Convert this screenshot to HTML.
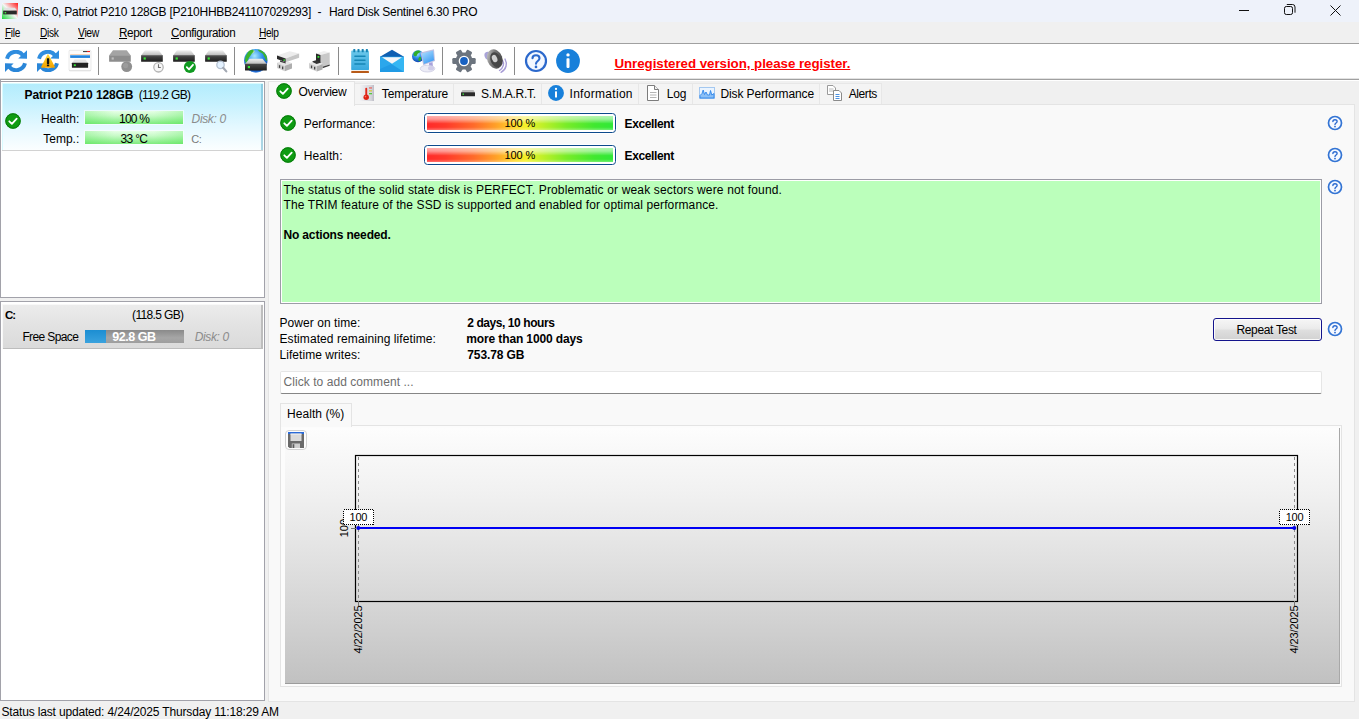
<!DOCTYPE html>
<html lang="en">
<head>
<meta charset="utf-8">
<title>Hard Disk Sentinel</title>
<style>
html,body{margin:0;padding:0}
body{width:1359px;height:719px;overflow:hidden;position:relative;background:#f0f0f0;font-family:"Liberation Sans",sans-serif;font-size:12px;color:#000}
.a{position:absolute}
.t{position:absolute;white-space:nowrap;line-height:14px;height:14px}
.b{font-weight:bold}
u{text-decoration-thickness:1px;text-underline-offset:1px}
#titlebar{left:0;top:0;width:1359px;height:23px;background:linear-gradient(#eef2fa 0,#eef2fa 22px,#eff1f5 22px)}
#menubar{left:0;top:22px;width:1359px;height:21px;background:#f0f0f0}
#toolbar{left:0;top:43px;width:1359px;height:38px;background:#fff;border-top:1px solid #a0a0a0;box-sizing:border-box;box-shadow:inset 0 -1px 0 #fff,inset 0 -2px 0 #a0a0a0,inset 0 -3px 0 #e2e2e2}
.sep{position:absolute;top:47px;width:1px;height:28px;background:#8a8a8a}
.ic{position:absolute;top:50px;width:22px;height:22px;overflow:visible}
.panel{position:absolute;background:#fff;border:1px solid #a2a2aa;box-sizing:border-box}
.tab{position:absolute;top:83px;height:21px;box-sizing:border-box;border:1px solid #e7e7e7;border-bottom:none;background:#f4f4f4}
.gbar{width:98px;height:13px;background:linear-gradient(90deg,rgba(110,232,110,.35),rgba(255,255,255,.12) 30%,rgba(255,255,255,.12) 70%,rgba(110,232,110,.35)),linear-gradient(#e2ffe2 0%,#c2fac2 35%,#8cf08c 75%,#6ce86c 100%);box-shadow:0 0 0 1px rgba(255,255,255,.55)}
.pbar{width:192px;height:20px;box-sizing:border-box;border:1px solid #0d4a8c;border-radius:3.500px;background:#fff;box-shadow:0 0 0 1px rgba(255,255,255,.9)}
.pbar i{position:absolute;left:2px;top:2px;right:2px;bottom:2px;background:linear-gradient(rgba(255,255,255,.62) 0%,rgba(255,255,255,.5) 22%,rgba(255,255,255,0) 55%,rgba(255,255,255,0) 80%,rgba(255,255,255,.3) 100%),linear-gradient(90deg,#ff2a2a 0%,#ff3a2a 10%,#ff6a2a 25%,#ffa028 37%,#ffd628 47%,#f4f028 53%,#c0f028 62%,#78ec28 75%,#40e830 90%,#30e838 100%)}
</style>
</head>
<body>
<svg width="0" height="0" style="position:absolute">
<defs>
<symbol id="ok" viewBox="0 0 16 16"><circle cx="8" cy="8" r="7.700" fill="#0e9c12"/><circle cx="8" cy="8" r="7.200" fill="none" stroke="#097a0c" stroke-width="1"/><path d="M4.300 8.300 L6.900 10.900 L11.700 5.600" fill="none" stroke="#fff" stroke-width="1.800" stroke-linecap="round" stroke-linejoin="round"/></symbol>
<symbol id="help" viewBox="0 0 16 16"><circle cx="8" cy="8" r="6.500" fill="#f6f9ff" stroke="#3374d4" stroke-width="1.700"/><path d="M5.900 6.500 C5.900 4.100 10.100 4.100 10.100 6.400 C10.100 8 8 7.900 8 9.600" fill="none" stroke="#2c6ad0" stroke-width="1.400" stroke-linecap="round"/><circle cx="8" cy="11.600" r="0.900" fill="#2c6ad0"/></symbol>
<linearGradient id="gtop" x1="0" y1="0" x2="0" y2="1"><stop offset="0" stop-color="#f2f2f2"/><stop offset="1" stop-color="#b9b9b9"/></linearGradient>
<linearGradient id="gfront" x1="0" y1="0" x2="0" y2="1"><stop offset="0" stop-color="#4a4a4a"/><stop offset="1" stop-color="#1e1e1e"/></linearGradient>
<linearGradient id="gwarn" x1="0" y1="0" x2="0" y2="1"><stop offset="0" stop-color="#ffd83a"/><stop offset="1" stop-color="#f4a300"/></linearGradient>
<linearGradient id="gmail" x1="0" y1="0" x2="1" y2="1"><stop offset="0" stop-color="#1a86d4"/><stop offset="1" stop-color="#3cbcf0"/></linearGradient>
<radialGradient id="gglobe" cx=".45" cy=".3" r=".75"><stop offset="0" stop-color="#a8e8ff"/><stop offset=".45" stop-color="#2f92ec"/><stop offset="1" stop-color="#0b3aa6"/></radialGradient>
<linearGradient id="gapp" x1="1" y1="0" x2="0" y2="1"><stop offset="0" stop-color="#ff1a1a"/><stop offset=".5" stop-color="#f6f6f6"/><stop offset="1" stop-color="#19d83a"/></linearGradient>
<symbol id="disk" viewBox="0 0 22 12"><polygon points="4,0.200 17.700,0.200 21.800,5.400 0.100,5.400" fill="url(#gtop)"/><rect x="0.100" y="5.200" width="21.700" height="6.500" rx=".5" fill="url(#gfront)"/><rect x="0.100" y="5.200" width="21.700" height="1" fill="#666" opacity=".6"/><rect x="2.600" y="7.400" width="2.200" height="2.200" fill="#35e535"/></symbol>
<symbol id="rf" viewBox="0 0 22 22"><g fill="#2f8ddf"><path d="M2 8.750 A9.200 9.200 0 0 1 18 5.200" stroke="#2f8ddf" stroke-width="4" fill="none"/><polygon points="22,0.200 22,8.800 13.200,8.500"/><path d="M20 13.300 A9.200 9.200 0 0 1 4 16.800" stroke="#2a86d8" stroke-width="4" fill="none"/><polygon points="0,22 0,13.300 8.600,13.500" fill="#2a86d8"/></g></symbol>
<symbol id="info" viewBox="0 0 24 24"><circle cx="12" cy="12" r="11.900" fill="#1880da"/><circle cx="12" cy="5.900" r="1.700" fill="#fff"/><rect x="10.500" y="9.200" width="3" height="9.700" rx=".8" fill="#fff"/></symbol>
</defs></svg>
<!-- title bar -->
<div class="a" id="titlebar"></div>
<div class="t" id="title" style="left:23.20px;top:5px;letter-spacing:-0.257px">Disk: 0, Patriot P210 128GB [P210HHBB241107029293]</div>
<div class="t" id="title2" style="left:317.60px;top:5px;letter-spacing:0.200px">-</div>
<div class="t" id="title3" style="left:328.90px;top:5px;letter-spacing:-0.262px">Hard Disk Sentinel 6.30 PRO</div>
<!-- menu bar -->
<div class="a" id="menubar"></div>
<div class="t" id="m1" style="left:4.83px;top:26px;letter-spacing:-0.4px;transform:scaleX(0.843);transform-origin:0 0"><u>F</u>ile</div>
<div class="t" id="m2" style="left:39.82px;top:26px;letter-spacing:-0.4px;transform:scaleX(0.849);transform-origin:0 0"><u>D</u>isk</div>
<div class="t" id="m3" style="left:77.81px;top:26px;letter-spacing:-0.4px;transform:scaleX(0.867);transform-origin:0 0"><u>V</u>iew</div>
<div class="t" id="m4" style="left:118.52px;top:26px;letter-spacing:-0.4px;transform:scaleX(0.976);transform-origin:0 0"><u>R</u>eport</div>
<div class="t" id="m5" style="left:170.62px;top:26px;letter-spacing:-0.4px;transform:scaleX(0.971);transform-origin:0 0"><u>C</u>onfiguration</div>
<div class="t" id="m6" style="left:258.62px;top:26px;letter-spacing:-0.4px;transform:scaleX(0.849);transform-origin:0 0"><u>H</u>elp</div>
<!-- toolbar -->
<div class="a" id="toolbar"></div>
<svg class="a" style="left:2px;top:3px" width="16" height="16" viewBox="0 0 16 16"><rect width="16" height="16" fill="url(#gapp)"/><polygon points="3,4.800 13,4.800 14.800,7.600 1.200,7.600" fill="#e2e2e2"/><rect x="1.200" y="7.600" width="13.600" height="3.800" fill="#2a2a2a"/><rect x="2.600" y="9" width="1.600" height="1.400" fill="#3fe53f"/></svg>
<!-- window controls -->
<svg class="a" style="left:1230px;top:0" width="129" height="22" viewBox="0 0 129 22" fill="none" stroke="#111" stroke-width="1"><line x1="9" y1="10.500" x2="19" y2="10.500"/><rect x="54.500" y="6.500" width="8" height="8" rx="1.800"/><path d="M56.800 4.500 H62.500 A2.500 2.500 0 0 1 65 7 V12.700"/><path d="M100.500 5.500 L110.500 15.500 M110.500 5.500 L100.500 15.500"/></svg>
<!-- toolbar icons -->
<svg class="ic" style="left:5px" viewBox="0 0 22 22"><use href="#rf"/></svg>
<svg class="ic" style="left:37px" viewBox="0 0 22 22"><use href="#rf"/><polygon points="11,5 4.900,17 17.200,17" fill="url(#gwarn)" stroke="url(#gwarn)" stroke-width="1.500" stroke-linejoin="round"/><rect x="9.900" y="8.300" width="2.300" height="5.600" rx=".4" fill="#111"/><rect x="9.900" y="14.500" width="2.300" height="1.700" rx=".3" fill="#111"/></svg>
<svg class="ic" style="left:68px;width:24px;height:23px" viewBox="0 0 24 23"><rect x="1" y=".8" width="22" height="20.500" rx="1" fill="#b8b8b8" opacity=".55"/><rect x="1" y=".300" width="22" height="20.200" rx="1" fill="#fcfcfc" stroke="#dedede" stroke-width=".6"/><rect x="2.200" y="4" width="19.800" height=".8" fill="#f6c8a8"/><rect x="2.200" y="5.300" width="19.800" height="2.600" fill="#1c7fdc"/><rect x="2.200" y="5.300" width="19.800" height=".8" fill="#5aa8ee"/><rect x="15" y="1" width="4" height="1.100" fill="#444"/><rect x="19" y="1" width="3" height="1.100" fill="#f02020"/><polygon points="6.500,9.600 17.500,9.600 20,13 4,13" fill="#e4e4e4"/><rect x="3.900" y="12.700" width="16.200" height="5" rx=".5" fill="#232323"/><rect x="5.800" y="14.300" width="2" height="1.800" fill="#35e535"/></svg>
<div class="sep" style="left:98px"></div>
<svg class="ic" style="left:109px" viewBox="0 0 22 22"><polygon points="4,0.200 17.700,0.200 21.800,5.400 0.100,5.400" fill="#a4a4a4"/><rect x="0.100" y="5.200" width="21.700" height="6.600" rx=".5" fill="#8d8d8d"/><rect x="2.600" y="7.400" width="2.200" height="2.200" fill="#bdbdbd"/><circle cx="17.700" cy="16.600" r="5.400" fill="#8f8f8f"/><circle cx="16.600" cy="15.600" r="2.600" fill="#9c9c9c"/></svg>
<svg class="ic" style="left:141px" viewBox="0 0 22 22"><use href="#disk" width="22" height="12"/><circle cx="17.500" cy="17.300" r="4.700" fill="#f6f6f6" stroke="#b4b4b4" stroke-width="1.300"/><path d="M17.500 14.200 V17.500 H19.800" fill="none" stroke="#6e6e6e" stroke-width="1.100"/></svg>
<svg class="ic" style="left:173px" viewBox="0 0 22 22"><use href="#disk" width="22" height="12"/><circle cx="16.900" cy="17" r="6" fill="#0f9a20"/><path d="M13.800 17.200 L16 19.300 L20 14.800" fill="none" stroke="#fff" stroke-width="1.800" stroke-linecap="round" stroke-linejoin="round"/></svg>
<svg class="ic" style="left:205px" viewBox="0 0 22 22"><use href="#disk" width="22" height="12"/><circle cx="15.500" cy="14.900" r="3.700" fill="#e4f2ff" stroke="#b4c0d0" stroke-width="1.300"/><path d="M18.200 17.800 L21.300 21.400" stroke="#a2a8b2" stroke-width="2.200" stroke-linecap="round"/></svg>
<div class="sep" style="left:234px"></div>
<svg class="ic" style="left:244px;top:48px;width:24px;height:25px" viewBox="0 0 24 25"><circle cx="11.800" cy="12.600" r="11.700" fill="url(#gglobe)"/><path d="M3.500 5 C5 2.500 8 1.200 9.500 2.200 C10.500 3.500 8.500 4.500 7.500 6 C6.500 8 5.500 8.500 4.500 10.500 C3.500 12.500 3.800 14.500 2.500 15.500 C0.800 14.500 0 10 3.500 5 Z M13.500 1.500 C17 1.800 20.500 4 22.300 7.500 C23.300 10 23.300 12.500 22.500 13 C21.500 12.500 21.800 10.500 20.500 9 C19.500 8 19.800 6.500 18.500 5.500 C17 4.500 14.500 3.500 13.500 1.500 Z" fill="#3cb52e"/><path d="M9.500 2.200 C10.500 3.500 8.500 4.500 7.500 6 L9 5 C10.500 4 11.500 3 9.500 2.200 Z" fill="#d8f08a"/><path d="M3 20.500 Q12 26.500 21 20.500 Q17 24.400 12 24.400 Q7 24.400 3 20.500 Z" fill="#2d7ce0"/><polygon points="5.500,10.700 18.500,10.700 22.800,16 1,16" fill="url(#gtop)"/><rect x="1" y="15.800" width="21.800" height="6.600" rx=".5" fill="url(#gfront)"/><rect x="3.800" y="18" width="2.200" height="2.200" fill="#35e535"/></svg>
<svg class="ic" style="left:277px" viewBox="0 0 22 22"><polygon points="0,5.500 12.600,1.300 22.100,3.600 8.700,8.500" fill="#ececec"/><polygon points="8.700,8.500 22.100,3.600 22.100,7.800 8.700,12.300" fill="#c6c6c6"/><polygon points="0,5.500 8.700,8.500 8.700,12.300 0,9" fill="#2a2a2a"/><rect x="6.400" y="9.400" width="1.600" height="1.400" fill="#35e535"/><polygon points="0,12.700 3,11.800 3,10.300 8.700,12.400 11,11.600 15,13.300 7.800,15.800" fill="#e4e4e4"/><polygon points="3,10.200 8.700,12.300 8.700,13.600 3,11.700" fill="#3c3c3c"/><polygon points="0,12.700 7.800,15.800 7.800,21.300 0,18" fill="#d0d0d0"/><polygon points="7.800,15.800 15,13.300 15,18.600 7.800,21.300" fill="#aeaeae"/><rect x="1.900" y="15.200" width="1.300" height="2.700" fill="#444"/><rect x="5" y="16.500" width="1.300" height="2.700" fill="#444"/></svg>
<svg class="ic" style="left:309px" viewBox="0 0 22 22"><polygon points="7,3.500 15,1 20.700,2.500 11.500,5" fill="#efefef"/><polygon points="11.500,5 20.700,2.500 20.700,14.500 11.500,17.500" fill="#c8c8c8"/><polygon points="13.500,16.800 20.700,14.500 20.700,15.800 13.500,18.200" fill="#3a3a3a"/><polygon points="7,3.500 11.500,5 11.500,13 7,11.500" fill="#2a2a2a"/><rect x="8.500" y="6" width="1.800" height="1.800" fill="#35e535"/><polygon points="3.500,11.300 7,10.300 11.500,12 11.500,13.800 7.500,15 3.500,13" fill="#333"/><polygon points="0,13 3.500,12 7.600,14 11.500,12.800 13.500,13.600 13.500,14.200 7.800,16.200" fill="#e4e4e4"/><polygon points="0,13 7.800,16.200 7.800,21.600 0,18.300" fill="#d0d0d0"/><polygon points="7.800,16.200 13.500,14.200 13.500,19.500 7.800,21.600" fill="#aeaeae"/><rect x="1.900" y="15.500" width="1.300" height="2.700" fill="#444"/><rect x="5" y="16.800" width="1.300" height="2.700" fill="#444"/></svg>
<div class="sep" style="left:338px"></div>
<svg class="ic" style="left:351px;top:49px;width:18px;height:24px" viewBox="0 0 18 24"><defs><linearGradient id="gnote" x1="0" y1="0" x2="0" y2="1"><stop offset="0" stop-color="#6cc8ea"/><stop offset="1" stop-color="#36a8de"/></linearGradient></defs><rect x="0.200" y="1.500" width="17.800" height="19.700" rx="1" fill="url(#gnote)"/><rect x="0.200" y="21" width="17.800" height="1.100" fill="#f4f0ea"/><rect x="0.200" y="22" width="17.800" height="1.900" rx=".4" fill="#b85a18"/><g fill="#1784b4"><rect x="2.300" y="0" width="2" height="3.200" rx=".5"/><rect x="6.500" y="0" width="2" height="3.200" rx=".5"/><rect x="10.700" y="0" width="2" height="3.200" rx=".5"/><rect x="14.900" y="0" width="2" height="3.200" rx=".5"/></g><g fill="#1687b6"><rect x="3.200" y="6.500" width="11.500" height="1.500" rx=".7"/><rect x="3.200" y="10.400" width="11.500" height="1.500" rx=".7"/><rect x="3.200" y="14.300" width="11.500" height="1.500" rx=".7"/></g></svg>
<svg class="ic" style="left:380px;top:49px;width:24px;height:23px" viewBox="0 0 24 23"><polygon points="0,7.700 12,0.700 24,7.700 24,9 0,9" fill="#0f5fb2"/><rect x="0" y="7.700" width="24" height="15.200" fill="#35b6f3"/><polygon points="0,7.700 24,22.900 0,22.900" fill="#219be5"/><polygon points="0,7.700 12,14.750 0,20" fill="#2ba7ec"/><polygon points="2,8.250 22,8.250 12,14.750" fill="#f6f6f8"/></svg>
<svg class="ic" style="left:411px;top:49px;width:25px;height:24px" viewBox="0 0 25 24"><defs><linearGradient id="gscr" x1="0" y1="0" x2=".6" y2="1"><stop offset="0" stop-color="#b4e2ff"/><stop offset="1" stop-color="#3f9ef4"/></linearGradient></defs><circle cx="7" cy="7.250" r="6" fill="url(#gglobe)"/><path d="M4 2.500 C6 1 9 1.200 9.500 2.500 C9 4 6.500 4 6 6 C5.500 8 3.500 7.500 2.500 6 C2.500 4.500 3 3.500 4 2.500 Z M8.500 8 C9.500 7.500 10.500 8.500 10 10.500 C9.500 12 8 12.500 7.500 11.500 C7.200 10 7.500 8.700 8.500 8 Z" fill="#2fae28"/><polygon points="9.500,3.500 23,0.250 24,12 12.250,16.250" fill="#c0c0e2"/><polygon points="10.700,4.400 22.200,1.600 23,11.300 12.900,14.900" fill="url(#gscr)"/><polygon points="18,14.200 21.500,13 22,18 18,18.500" fill="#a8a2dc"/><ellipse cx="16.500" cy="19.600" rx="7.300" ry="3.400" fill="#ececf6" stroke="#c6c6de" stroke-width=".7"/><ellipse cx="20" cy="19.300" rx="3" ry="2.200" fill="#cfcce8"/></svg>
<div class="sep" style="left:442px"></div>
<svg class="ic" style="left:452px;top:49px;width:24px;height:24px" viewBox="-12 -12 24 24"><defs><linearGradient id="ggear" x1="0" y1="0" x2="0" y2="1"><stop offset="0" stop-color="#8a929c"/><stop offset="1" stop-color="#5a626c"/></linearGradient></defs><g fill="#6c747e" transform="rotate(30)"><circle r="8.600"/><g id="teeth"><rect x="-3" y="-11.700" width="6" height="5" rx="1.200"/><rect x="-3" y="6.700" width="6" height="5" rx="1.200"/></g><use href="#teeth" transform="rotate(60)"/><use href="#teeth" transform="rotate(120)"/></g><circle r="5.300" fill="#fff"/><circle r="3.900" fill="#1761c2"/></svg>
<svg class="ic" style="left:484px;top:49px;width:24px;height:24px" viewBox="0 0 24 24"><defs><linearGradient id="gspk" x1="0" y1="0" x2="1" y2="1"><stop offset="0" stop-color="#e0e0e0"/><stop offset=".4" stop-color="#7a7a7a"/><stop offset="1" stop-color="#303030"/></linearGradient></defs><path d="M18.500 11.500 C20.500 14.500 19.500 19 15.500 21.500 M21 10 C23.500 14.500 22.500 20.500 17 23.300" fill="none" stroke="#a79cd6" stroke-width="1.400" stroke-linecap="round"/><ellipse cx="3.800" cy="6.800" rx="3.200" ry="4" transform="rotate(-20 3.800 6.800)" fill="#a9a4d8"/><ellipse cx="10.800" cy="10" rx="7.600" ry="10" transform="rotate(-22 10.800 10)" fill="url(#gspk)"/><ellipse cx="11.800" cy="10.700" rx="5.200" ry="7.800" transform="rotate(-22 11.800 10.700)" fill="#474747"/><ellipse cx="10.600" cy="9.600" rx="2.600" ry="3.800" transform="rotate(-22 10.600 9.600)" fill="#cfcfcf"/></svg>
<div class="sep" style="left:514px"></div>
<svg class="ic" style="left:524px;top:49px;width:24px;height:24px" viewBox="0 0 24 24"><circle cx="12" cy="12" r="10" fill="#f4f8ff" stroke="#2b68cc" stroke-width="2.200"/><path d="M8.500 9.300 C8.500 5.300 15.500 5.300 15.500 9.300 C15.500 12 12 12 12 14.800" fill="none" stroke="#2b68cc" stroke-width="2.100" stroke-linecap="round"/><circle cx="12" cy="17.900" r="1.350" fill="#2b68cc"/></svg>
<svg class="ic" style="left:556px;top:49px;width:24px;height:24px" viewBox="0 0 24 24"><use href="#info"/></svg>

<div class="t b" id="unreg" style="left:614.40px;top:56px;letter-spacing:-0.049px;font-size:13.33px;line-height:16px;height:16px;text-decoration:underline;color:#ff0000">Unregistered version, please register.</div>
<!-- left panels -->
<div class="a" style="left:0;top:79px;width:1px;height:3px;background:#a2a2aa"></div>
<div class="panel" style="left:0;top:81px;width:265px;height:217px"></div>
<div class="panel" style="left:0;top:301px;width:265px;height:400px"></div>
<!-- disk item -->
<div class="a" style="left:2px;top:83px;width:261px;height:67px;background:linear-gradient(#b2ecfd 0%,#c6f1fe 30%,#e4f8ff 65%,#fbfeff 100%);box-shadow:inset 1px 1px 0 #d9fbff,inset -2px 0 0 rgba(110,180,205,.55)"></div>
<div class="a" style="left:2px;top:150px;width:261px;height:1px;background:#d2d2d2"></div>
<svg class="a" style="left:5px;top:113px" width="16" height="16" viewBox="0 0 16 16"><use href="#ok"/></svg>
<div class="t b" id="dname" style="left:24.50px;top:88px;letter-spacing:-0.100px">Patriot P210 128GB</div>
<div class="t" id="dsize" style="left:138.70px;top:88px;letter-spacing:-0.600px">(119.2 GB)</div>
<div class="t" id="lh" style="left:40.90px;top:112px;letter-spacing:0.067px">Health:</div>
<div class="t" id="lt" style="left:43.20px;top:132px;letter-spacing:0.020px">Temp.:</div>
<div class="a gbar" style="left:85px;top:111px"></div>
<div class="a gbar" style="left:85px;top:131px"></div>
<div class="t" id="bh" style="left:119.00px;top:112px;letter-spacing:-0.750px">100 %</div>
<div class="t" id="bt" style="left:120.40px;top:132px;letter-spacing:-0.625px">33 °C</div>
<div class="t" id="d0" style="left:191.60px;top:112px;letter-spacing:-0.367px;font-style:italic;color:#8c8c8c">Disk: 0</div>
<div class="t" id="dc" style="left:191.30px;top:132px;letter-spacing:-0.500px;font-size:11.0px;color:#7a7a7a">C:</div>
<!-- partition item -->
<div class="a" style="left:2px;top:304px;width:261px;height:45px;background:linear-gradient(#ececec,#e2e2e2 50%,#dadada);box-shadow:inset 1px 1px 0 #f8f8f8,inset -2px -1px 0 #bdbdbd"></div>
<div class="t b" id="pc" style="left:5.00px;top:308px;letter-spacing:-1.100px;font-size:11.5px">C:</div>
<div class="t" id="psz" style="left:132.10px;top:308px;letter-spacing:-0.656px">(118.5 GB)</div>
<div class="t" id="pfs" style="left:22.40px;top:330px;letter-spacing:-0.611px">Free Space</div>
<div class="a" style="left:85px;top:330px;width:99px;height:13px;background:linear-gradient(#8a8a8a,#a6a6a6 60%,#9e9e9e)"></div>
<div class="a" style="left:85px;top:330px;width:21px;height:13px;background:linear-gradient(#1c8ed2,#3aa2de)"></div>
<div class="t b" id="pfv" style="left:112.30px;top:330px;letter-spacing:-0.450px;font-size:12.5px;color:#fff">92.8 GB</div>
<div class="t" id="pd0" style="left:194.70px;top:330px;letter-spacing:-0.367px;font-style:italic;color:#8c8c8c">Disk: 0</div>

<!-- tab pane -->
<div class="a" style="left:268px;top:104px;width:1087px;height:598px;background:#f9f9f9;border:1px solid #e4e4e4;box-sizing:border-box"></div>
<!-- tabs -->
<div class="tab" style="left:354px;width:100px"></div>
<div class="tab" style="left:453px;width:89px"></div>
<div class="tab" style="left:541px;width:98px"></div>
<div class="tab" style="left:638px;width:55px"></div>
<div class="tab" style="left:692px;width:128px"></div>
<div class="tab" style="left:819px;width:63px"></div>
<div class="a" style="left:268px;top:81px;width:87px;height:25px;background:#f9f9f9;border:1px solid #e4e4e4;border-bottom:none;box-sizing:border-box"></div>
<svg class="a" style="left:276px;top:83px" width="16" height="16" viewBox="0 0 16 16"><use href="#ok"/></svg>
<div class="t" id="t1" style="left:298.50px;top:85px;letter-spacing:-0.271px">Overview</div>
<div class="t" id="t2" style="left:381.80px;top:87px;letter-spacing:-0.090px">Temperature</div>
<div class="t" id="t3" style="left:481.10px;top:87px;letter-spacing:-0.267px">S.M.A.R.T.</div>
<div class="t" id="t4" style="left:569.50px;top:87px;letter-spacing:0.300px">Information</div>
<div class="t" id="t5" style="left:666.80px;top:87px;letter-spacing:-0.150px">Log</div>
<div class="t" id="t6" style="left:720.40px;top:87px;letter-spacing:-0.107px">Disk Performance</div>
<div class="t" id="t7" style="left:848.70px;top:87px;letter-spacing:-0.400px">Alerts</div>
<svg class="a" style="left:360px;top:85px" width="14" height="16" viewBox="0 0 14 16"><defs><linearGradient id="gcard" x1="0" y1="0" x2="1" y2="0"><stop offset="0" stop-color="#f2f2f4"/><stop offset=".8" stop-color="#d4d4da"/><stop offset="1" stop-color="#bcbcc6"/></linearGradient></defs><rect width="14" height="16" fill="url(#gcard)"/><rect x="5.300" y="2.800" width="1.900" height="8.500" rx=".9" fill="#e2281a"/><circle cx="6.200" cy="12.300" r="2.700" fill="#de2214"/><circle cx="5.500" cy="11.600" r=".8" fill="#f47a6c"/><rect x="9" y="2.300" width="3" height="1.300" fill="#e86a64"/><rect x="9" y="5.200" width="3" height="1.300" fill="#d6c83e"/><rect x="9" y="8" width="3" height="1.300" fill="#52c840"/></svg>
<svg class="a" style="left:461px;top:90px" width="14" height="7" viewBox="0 0 14 7"><polygon points="1.500,0 12.500,0 14,2.500 0,2.500" fill="#bdbdbd"/><rect x="0" y="2.300" width="14" height="4" rx=".5" fill="#2b2b2b"/><rect x="1.500" y="3.500" width="1.500" height="1.300" fill="#3fe53f"/></svg>
<svg class="a" style="left:548px;top:85px" width="16" height="16" viewBox="0 0 24 24"><use href="#info"/></svg>
<svg class="a" style="left:646px;top:85px" width="14" height="17" viewBox="0 0 14 17"><path d="M1.500 .500 H8.500 L12.500 4.500 V15.500 H1.500 Z" fill="#fff" stroke="#7c7c7c"/><path d="M8.500 .500 V4.500 H12.500" fill="#f0f0f0" stroke="#7c7c7c"/><path d="M4 7.500 H10.500 M4 10 H10.500 M4 12.500 H10.500" stroke="#b4b4b4"/></svg>
<svg class="a" style="left:699px;top:87px" width="16" height="12" viewBox="0 0 16 12"><rect x=".5" y=".5" width="15" height="11" fill="#eaf4ff" stroke="#a4c8f0"/><path d="M1 8.500 L3 6.500 L4.200 3 L5.500 7.500 L7 5 L8.500 8 L10.500 8 L11.500 3.500 L12.800 8 L15 6.500 V11 H1 Z" fill="#8cc0f6" stroke="#2f86ea" stroke-width=".9"/></svg>
<svg class="a" style="left:826px;top:84px" width="17" height="18" viewBox="0 0 17 18"><path d="M1.500 1.500 H7 L9.500 4 V10.500 H1.500 Z" fill="#fff" stroke="#9a9a9a"/><path d="M3 5 H7.500 M3 7 H7.500" stroke="#bcbcbc"/><path d="M7.500 6.500 H13 L15.500 9 V16.500 H7.500 Z" fill="#fff" stroke="#8a8a8a"/><path d="M9.500 10.500 H13.500 M9.500 12.500 H13.500 M9.500 14.500 H13.500" stroke="#4a90e0"/></svg>

<!-- performance / health rows -->
<svg class="a" style="left:280px;top:115px" width="16" height="16" viewBox="0 0 16 16"><use href="#ok"/></svg>
<svg class="a" style="left:280px;top:147px" width="16" height="16" viewBox="0 0 16 16"><use href="#ok"/></svg>
<div class="t" id="lp" style="left:303.70px;top:117px;letter-spacing:-0.036px">Performance:</div>
<div class="t" id="lhh" style="left:303.70px;top:149px;letter-spacing:0.133px">Health:</div>
<div class="a pbar" style="left:424px;top:113px"><i></i></div>
<div class="a pbar" style="left:424px;top:145px"><i></i></div>
<div class="t" id="pv1" style="left:504.60px;top:116px;letter-spacing:-0.150px;font-size:11px">100 %</div>
<div class="t" id="pv2" style="left:504.60px;top:148px;letter-spacing:-0.150px;font-size:11px">100 %</div>
<div class="t b" id="ex1" style="left:624.60px;top:117px;letter-spacing:-0.375px">Excellent</div>
<div class="t b" id="ex2" style="left:624.60px;top:149px;letter-spacing:-0.375px">Excellent</div>
<svg class="a" style="left:1327px;top:115px" width="16" height="16"><use href="#help"/></svg>
<svg class="a" style="left:1327px;top:147px" width="16" height="16"><use href="#help"/></svg>
<svg class="a" style="left:1327px;top:179px" width="16" height="16"><use href="#help"/></svg>
<svg class="a" style="left:1327px;top:321px" width="16" height="16"><use href="#help"/></svg>
<!-- status text box -->
<div class="a" style="left:280px;top:179px;width:1042px;height:125px;box-sizing:border-box;background:#bbffbb;border:1px solid #9c9ca6;box-shadow:inset 0 0 0 1px #fff"></div>
<div class="t" id="s1" style="left:283.50px;top:183px;letter-spacing:0.152px;line-height:15px">The status of the solid state disk is PERFECT. Problematic or weak sectors were not found.</div>
<div class="t" id="s2" style="left:283.50px;top:198px;letter-spacing:0.108px;line-height:15px">The TRIM feature of the SSD is supported and enabled for optimal performance.</div>
<div class="t b" id="s3" style="left:283.50px;top:228px;letter-spacing:-0.159px;line-height:15px">No actions needed.</div>
<!-- info rows -->
<div class="t" id="i1" style="left:279.50px;top:316px;letter-spacing:0.062px">Power on time:</div>
<div class="t" id="i2" style="left:279.50px;top:332px;letter-spacing:0.082px">Estimated remaining lifetime:</div>
<div class="t" id="i3" style="left:279.50px;top:348px;letter-spacing:0.053px">Lifetime writes:</div>
<div class="t b" id="v1" style="left:467.30px;top:316px;letter-spacing:-0.433px">2 days, 10 hours</div>
<div class="t b" id="v2" style="left:466.30px;top:332px;letter-spacing:-0.128px">more than 1000 days</div>
<div class="t b" id="v3" style="left:467.30px;top:348px;letter-spacing:-0.125px">753.78 GB</div>
<div class="a" id="btn" style="left:1213px;top:318px;width:109px;height:23px;box-sizing:border-box;border:1px solid #14148c;border-radius:3px;background:linear-gradient(#f6f6f6,#ebebeb 45%,#dedede 55%,#d2d2d2);box-shadow:inset 0 0 0 1px rgba(255,255,255,.85)"></div>
<div class="t" id="bt1" style="left:1236.40px;top:323px;letter-spacing:-0.330px">Repeat Test</div>
<!-- comment box -->
<div class="a" style="left:280px;top:371px;width:1042px;height:23px;box-sizing:border-box;background:#fff;border:1px solid #e6e6e6;border-bottom-color:#868686;border-radius:2px"></div>
<div class="t" id="cm" style="left:283.50px;top:375px;letter-spacing:0.057px;;color:#6d6d6d">Click to add comment ...</div>
<!-- chart tab -->
<div class="a" style="left:280px;top:425px;width:1062px;height:262px;box-sizing:border-box;background:#fcfcfc;border:1px solid #e4e4e4"></div>
<div class="a" style="left:280px;top:403px;width:72px;height:24px;box-sizing:border-box;background:#f9f9f9;border:1px solid #e4e4e4;border-bottom:none"></div>
<div class="t" id="ct" style="left:287.00px;top:407px;letter-spacing:0.056px">Health (%)</div>
<div class="a" style="left:285px;top:428px;width:1055px;height:256px;box-sizing:border-box;background:linear-gradient(#fdfdfd 0%,#f1f1f1 25%,#e2e2e2 50%,#d2d2d2 75%,#c1c1c1 100%);border-right:1px solid #a8a8a8;border-bottom:1px solid #9c9c9c"></div>
<svg class="a" style="left:285px;top:428px" width="1055" height="257" viewBox="285 428 1055 257" font-family="Liberation Sans, sans-serif" font-size="11">
<rect x="355.500" y="455.500" width="942" height="146" fill="none" stroke="#000" stroke-width="1.200"/>
<line x1="358.500" y1="457" x2="358.500" y2="601" stroke="#8a8a8a" stroke-width="1" stroke-dasharray="3,3"/>
<line x1="1294.500" y1="457" x2="1294.500" y2="601" stroke="#8a8a8a" stroke-width="1" stroke-dasharray="3,3"/>
<line x1="358.500" y1="601" x2="358.500" y2="606" stroke="#777" stroke-width="1"/>
<line x1="1294.500" y1="601" x2="1294.500" y2="606" stroke="#777" stroke-width="1"/>
<line x1="351" y1="528.500" x2="356" y2="528.500" stroke="#777" stroke-width="1"/>
<text transform="translate(348.400,537.300) rotate(-90)" id="yl">100</text>
<line x1="358" y1="528" x2="1294" y2="528" stroke="#0000f4" stroke-width="2"/>
<circle cx="358.300" cy="528" r="2" fill="#0000e8"/>
<circle cx="1294.300" cy="528" r="2" fill="#0000e8"/>
<rect x="343.500" y="509.500" width="30" height="15" fill="#fff" stroke="#000" stroke-width="1" stroke-dasharray="1,1" shape-rendering="crispEdges"/>
<rect x="1279.500" y="509.500" width="30" height="15" fill="#fff" stroke="#000" stroke-width="1" stroke-dasharray="1,1" shape-rendering="crispEdges"/>
<text x="349.500" y="520.800" letter-spacing="-0.200" id="b1">100</text>
<text x="1285.700" y="520.800" letter-spacing="-0.200" id="b2">100</text>
<text transform="translate(362,653.400) rotate(-90)" letter-spacing="-0.100" id="x1">4/22/2025</text>
<text transform="translate(1298,653.400) rotate(-90)" letter-spacing="-0.100" id="x2">4/23/2025</text>
</svg>
<!-- save button -->
<div class="a" style="left:285px;top:430px;width:22px;height:20px;box-sizing:border-box;border:1px solid #d2d2d2;border-radius:4px;background:#fdfdfd"></div>
<svg class="a" style="left:288px;top:432px" width="16" height="16" viewBox="0 0 16 16"><path d="M0 0 H16 V16 H1.500 L0 14.500 Z" fill="#6a6a6a"/><rect x="0" y="0" width="16" height="2" fill="#2a6ad8"/><rect x="2.500" y="1.600" width="11" height="7.400" fill="#dadada"/><rect x="2.500" y="1.600" width="11" height="1" fill="#f0f0f0"/><rect x="3.800" y="11.500" width="8.200" height="4.500" fill="#cfcfcf"/><rect x="4.600" y="12.200" width="1.700" height="3.800" fill="#5a5a5a"/></svg>


<!-- status bar -->
<div class="t" id="status" style="left:1.50px;top:705px;letter-spacing:-0.164px">Status last updated: 4/24/2025 Thursday 11:18:29 AM</div>
</body>
</html>
